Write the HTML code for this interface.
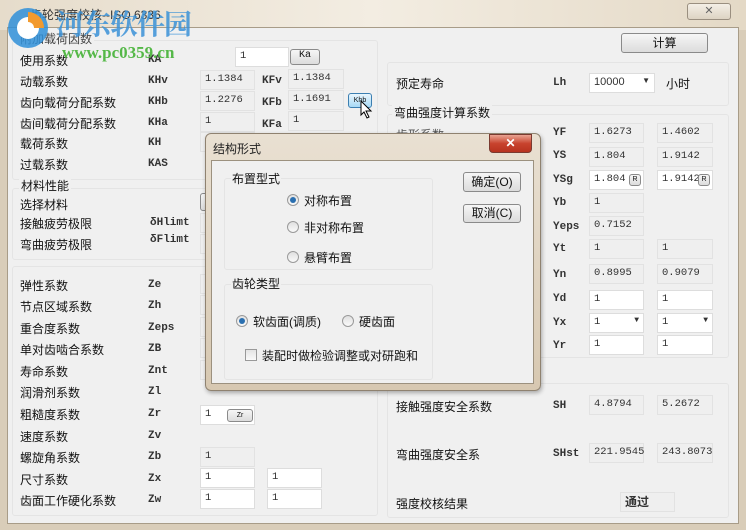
<!DOCTYPE html>
<html><head><meta charset="utf-8"><style>
*{margin:0;padding:0;box-sizing:border-box}
body{width:746px;height:530px;overflow:hidden;background:#d9cdb9;font-family:"Liberation Sans","Noto Sans CJK SC",sans-serif;font-size:12px;color:#111;position:relative}
.a{position:absolute;white-space:nowrap}
.s{position:absolute;font-family:"Liberation Mono",monospace;font-size:11px;font-weight:bold;color:#333}
.r{position:absolute;height:20px;background:#efefef;border:1px solid #e2e2e2;font-family:"Liberation Mono",monospace;font-size:10.5px;padding:2px 0 0 4px;color:#333}
.w{position:absolute;height:20px;background:#fff;border:1px solid #ddd;font-family:"Liberation Mono",monospace;font-size:10.5px;padding:2px 0 0 4px;color:#333}
.g{position:absolute;border:1px solid #e4e4e4;border-radius:3px}
.b{position:absolute;border:1px solid #8a8a8a;border-radius:3px;background:linear-gradient(#f6f6f6,#dcdcdc);text-align:center;font-size:11px}
.rad{position:absolute;width:12px;height:12px;border-radius:50%;border:1px solid #9a9a9a;background:linear-gradient(#e0e0e0,#fafafa)}
.rad.on::after{content:"";position:absolute;left:2px;top:2px;width:6px;height:6px;border-radius:50%;background:#2a6fb0}
</style></head><body>
<div class="a" style="left:0;top:0;width:746px;height:30px;background:linear-gradient(90deg,#e6dccb,#f3ede2 50%,#e4d9c6)"></div>
<div class="a" style="left:30px;top:6px;font-size:12px;color:#333">齿轮强度校核--ISO 6336</div>
<div class="a" style="left:687px;top:3px;width:44px;height:17px;border:1px solid #9a8f80;border-radius:3px;background:linear-gradient(#f4efe6,#ddd3c3);text-align:center;color:#666;font-size:11px;line-height:15px">✕</div>
<div class="a" style="left:7px;top:27px;width:732px;height:497px;background:#f0f0f0;border:1px solid #a89c88"></div>

<div class="g" style="left:12px;top:40px;width:366px;height:140px"></div>
<div class="a" style="left:18px;top:30px;background:#f0f0f0;padding:0 2px;color:#444">附加载荷因数</div>
<div class="g" style="left:12px;top:188px;width:366px;height:72px"></div>
<div class="a" style="left:19px;top:177px;background:#f0f0f0;padding:0 2px">材料性能</div>
<div class="g" style="left:12px;top:266px;width:366px;height:250px"></div>

<div class="a" style="left:20px;top:52px">使用系数</div><div class="s" style="left:148px;top:54px">KA</div>
<div class="w" style="left:235px;top:47px;width:54px">1</div><div class="b" style="left:290px;top:49px;width:30px;height:16px;font-family:'Liberation Mono';font-size:10px">Ka</div>
<div class="a" style="left:20px;top:73px">动载系数</div><div class="s" style="left:148px;top:75px">KHv</div>
<div class="r" style="left:200px;top:70px;width:55px">1.1384</div><div class="s" style="left:262px;top:75px">KFv</div><div class="r" style="left:288px;top:69px;width:56px">1.1384</div>
<div class="a" style="left:20px;top:94px">齿向载荷分配系数</div><div class="s" style="left:148px;top:96px">KHb</div>
<div class="r" style="left:200px;top:91px;width:55px">1.2276</div><div class="s" style="left:262px;top:97px">KFb</div><div class="r" style="left:288px;top:90px;width:56px">1.1691</div>
<div class="b" style="left:348px;top:93px;width:24px;height:15px;border-color:#3c7fb1;background:linear-gradient(#eaf6fd,#a7d9f5);font-size:7px;line-height:13px">Khb</div>
<svg class="a" style="left:360px;top:100px" width="14" height="20"><path d="M1 1 L1 15 L4 12 L7 18 L9 17 L6 11 L11 11 Z" fill="#fff" stroke="#000"/></svg>
<div class="a" style="left:20px;top:115px">齿间载荷分配系数</div><div class="s" style="left:148px;top:117px">KHa</div>
<div class="r" style="left:200px;top:112px;width:55px">1</div><div class="s" style="left:262px;top:119px">KFa</div><div class="r" style="left:288px;top:111px;width:56px">1</div>
<div class="a" style="left:20px;top:135px">载荷系数</div><div class="s" style="left:148px;top:137px">KH</div><div class="r" style="left:200px;top:132px;width:55px">1</div>
<div class="a" style="left:20px;top:156px">过载系数</div><div class="s" style="left:148px;top:158px">KAS</div>
<div class="a" style="left:20px;top:196px">选择材料</div><div class="b" style="left:200px;top:193px;width:12px;height:18px"></div>
<div class="a" style="left:20px;top:215px">接触疲劳极限</div><div class="s" style="left:150px;top:217px">δHlimt</div><div class="r" style="left:200px;top:213px;width:55px">1</div>
<div class="a" style="left:20px;top:236px">弯曲疲劳极限</div><div class="s" style="left:150px;top:234px">δFlimt</div><div class="r" style="left:200px;top:234px;width:55px">6</div>

<div class="a" style="left:20px;top:277px">弹性系数</div><div class="s" style="left:148px;top:279px">Ze</div><div class="r" style="left:200px;top:274px;width:55px">1</div>
<div class="a" style="left:20px;top:298px">节点区域系数</div><div class="s" style="left:148px;top:300px">Zh</div><div class="r" style="left:200px;top:295px;width:55px">2</div>
<div class="a" style="left:20px;top:320px">重合度系数</div><div class="s" style="left:148px;top:322px">Zeps</div><div class="r" style="left:200px;top:317px;width:55px">0</div>
<div class="a" style="left:20px;top:341px">单对齿啮合系数</div><div class="s" style="left:148px;top:343px">ZB</div><div class="r" style="left:200px;top:338px;width:55px">1</div>
<div class="a" style="left:20px;top:363px">寿命系数</div><div class="s" style="left:148px;top:365px">Znt</div><div class="r" style="left:200px;top:360px;width:55px">1</div>
<div class="a" style="left:20px;top:384px">润滑剂系数</div><div class="s" style="left:148px;top:386px">Zl</div>
<div class="a" style="left:20px;top:406px">粗糙度系数</div><div class="s" style="left:148px;top:408px">Zr</div>
<div class="w" style="left:200px;top:405px;width:55px">1</div><div class="b" style="left:227px;top:409px;width:26px;height:13px;font-size:7px;line-height:11px">Zr</div>
<div class="a" style="left:20px;top:428px">速度系数</div><div class="s" style="left:148px;top:430px">Zv</div>
<div class="a" style="left:20px;top:449px">螺旋角系数</div><div class="s" style="left:148px;top:451px">Zb</div><div class="r" style="left:200px;top:447px;width:55px">1</div>
<div class="a" style="left:20px;top:471px">尺寸系数</div><div class="s" style="left:148px;top:473px">Zx</div><div class="w" style="left:200px;top:468px;width:55px">1</div><div class="w" style="left:267px;top:468px;width:55px">1</div>
<div class="a" style="left:20px;top:492px">齿面工作硬化系数</div><div class="s" style="left:148px;top:494px">Zw</div><div class="w" style="left:200px;top:489px;width:55px">1</div><div class="w" style="left:267px;top:489px;width:55px">1</div>

<div class="b" style="left:621px;top:33px;width:87px;height:20px;line-height:18px;font-size:12px">计算</div>
<div class="g" style="left:387px;top:62px;width:342px;height:44px"></div>
<div class="a" style="left:396px;top:75px">预定寿命</div><div class="s" style="left:553px;top:77px">Lh</div>
<div class="w" style="left:589px;top:73px;width:66px;font-family:'Liberation Sans';font-size:11px">10000<span style="position:absolute;right:4px;top:2px;font-size:8px">▼</span></div>
<div class="a" style="left:666px;top:75px">小时</div>
<div class="g" style="left:387px;top:114px;width:342px;height:244px"></div>
<div class="a" style="left:392px;top:104px;background:#f0f0f0;padding:0 2px">弯曲强度计算系数</div>
<div class="a" style="left:396px;top:126px;color:#555">齿形系数</div>
<div class="s" style="left:553px;top:127px">YF</div><div class="r" style="left:589px;top:123px;width:55px">1.6273</div><div class="r" style="left:657px;top:123px;width:56px">1.4602</div>
<div class="s" style="left:553px;top:150px">YS</div><div class="r" style="left:589px;top:147px;width:55px">1.804</div><div class="r" style="left:657px;top:147px;width:56px">1.9142</div>
<div class="s" style="left:553px;top:174px">YSg</div><div class="w" style="left:589px;top:170px;width:55px">1.804</div><div class="w" style="left:657px;top:170px;width:56px">1.9142</div>
<div class="b" style="left:629px;top:174px;width:12px;height:12px;font-size:7px;line-height:10px">R</div><div class="b" style="left:698px;top:174px;width:12px;height:12px;font-size:7px;line-height:10px">R</div>
<div class="s" style="left:553px;top:197px">Yb</div><div class="r" style="left:589px;top:193px;width:55px">1</div>
<div class="s" style="left:553px;top:221px">Yeps</div><div class="r" style="left:589px;top:216px;width:55px">0.7152</div>
<div class="s" style="left:553px;top:243px">Yt</div><div class="r" style="left:589px;top:239px;width:55px">1</div><div class="r" style="left:657px;top:239px;width:56px">1</div>
<div class="s" style="left:553px;top:269px">Yn</div><div class="r" style="left:589px;top:264px;width:55px">0.8995</div><div class="r" style="left:657px;top:264px;width:56px">0.9079</div>
<div class="s" style="left:553px;top:293px">Yd</div><div class="w" style="left:589px;top:290px;width:55px">1</div><div class="w" style="left:657px;top:290px;width:56px">1</div>
<div class="s" style="left:553px;top:317px">Yx</div><div class="w" style="left:589px;top:313px;width:55px">1<span style="position:absolute;right:4px;top:2px;font-size:8px">▼</span></div><div class="w" style="left:657px;top:313px;width:56px">1<span style="position:absolute;right:4px;top:2px;font-size:8px">▼</span></div>
<div class="s" style="left:553px;top:340px">Yr</div><div class="w" style="left:589px;top:335px;width:55px">1</div><div class="w" style="left:657px;top:335px;width:56px">1</div>
<div class="g" style="left:387px;top:383px;width:342px;height:135px"></div>
<div class="a" style="left:396px;top:398px">接触强度安全系数</div><div class="s" style="left:553px;top:400px">SH</div><div class="r" style="left:589px;top:395px;width:55px">4.8794</div><div class="r" style="left:657px;top:395px;width:56px">5.2672</div>
<div class="a" style="left:396px;top:446px">弯曲强度安全系</div><div class="s" style="left:553px;top:448px">SHst</div><div class="r" style="left:589px;top:443px;width:55px">221.9545</div><div class="r" style="left:657px;top:443px;width:56px">243.8073</div>
<div class="a" style="left:396px;top:495px">强度校核结果</div><div class="r" style="left:620px;top:492px;width:55px;font-family:'Liberation Sans','Noto Sans CJK SC';font-weight:bold;font-size:12px;padding-top:0">通过</div>

<div class="a" style="left:205px;top:133px;width:336px;height:258px;background:linear-gradient(#e9e0d2,#d7c8b1);border:1px solid #8f8270;border-radius:6px;box-shadow:1px 2px 4px rgba(0,0,0,.3)"></div>
<div class="a" style="left:213px;top:140px;color:#222">结构形式</div>
<div class="a" style="left:489px;top:134px;width:43px;height:19px;border:1px solid #7a3a30;border-radius:0 0 4px 4px;background:linear-gradient(#e9a392,#c8432e 50%,#b7321f);color:#fff;text-align:center;font-weight:bold;font-size:12px;line-height:17px">✕</div>
<div class="a" style="left:211px;top:160px;width:323px;height:224px;background:#f0f0f0;border:1px solid #9c917f"></div>
<div class="g" style="left:224px;top:178px;width:209px;height:92px"></div>
<div class="a" style="left:231px;top:170px;background:#f0f0f0;padding:0 1px">布置型式</div>
<div class="rad on" style="left:287px;top:194px"></div><div class="a" style="left:304px;top:192px">对称布置</div>
<div class="rad" style="left:287px;top:221px"></div><div class="a" style="left:304px;top:219px">非对称布置</div>
<div class="rad" style="left:287px;top:251px"></div><div class="a" style="left:304px;top:249px">悬臂布置</div>
<div class="g" style="left:224px;top:284px;width:209px;height:96px"></div>
<div class="a" style="left:231px;top:275px;background:#f0f0f0;padding:0 1px">齿轮类型</div>
<div class="rad on" style="left:236px;top:315px"></div><div class="a" style="left:253px;top:313px">软齿面(调质)</div>
<div class="rad" style="left:342px;top:315px"></div><div class="a" style="left:359px;top:313px">硬齿面</div>
<div class="a" style="left:245px;top:349px;width:12px;height:12px;border:1px solid #999;background:linear-gradient(#e4e4e4,#fafafa)"></div><div class="a" style="left:262px;top:347px">装配时做检验调整或对研跑和</div>
<div class="b" style="left:463px;top:172px;width:58px;height:20px;line-height:18px;font-size:12px">确定(O)</div>
<div class="b" style="left:463px;top:204px;width:58px;height:19px;line-height:17px;font-size:12px">取消(C)</div>

<svg class="a" style="left:4px;top:6px" width="50" height="44"><circle cx="24" cy="22" r="20" fill="#2f8fd8" opacity=".85"/><circle cx="24" cy="22" r="11" fill="#fff"/><path d="M24 6 A16 16 0 0 1 40 22 L30 22 A6 6 0 0 0 24 16Z" fill="#f29a2e"/></svg>
<div class="a" style="left:56px;top:3px;font-size:28px;font-weight:bold;color:#3a92d8;opacity:.85;font-family:'Noto Serif CJK SC','Noto Sans CJK SC',serif;letter-spacing:-1px">河东软件园</div>
<div class="a" style="left:62px;top:43px;font-size:17px;font-weight:bold;color:#55b848;font-family:'Liberation Serif',serif">www.pc0359.cn</div>
</body></html>
